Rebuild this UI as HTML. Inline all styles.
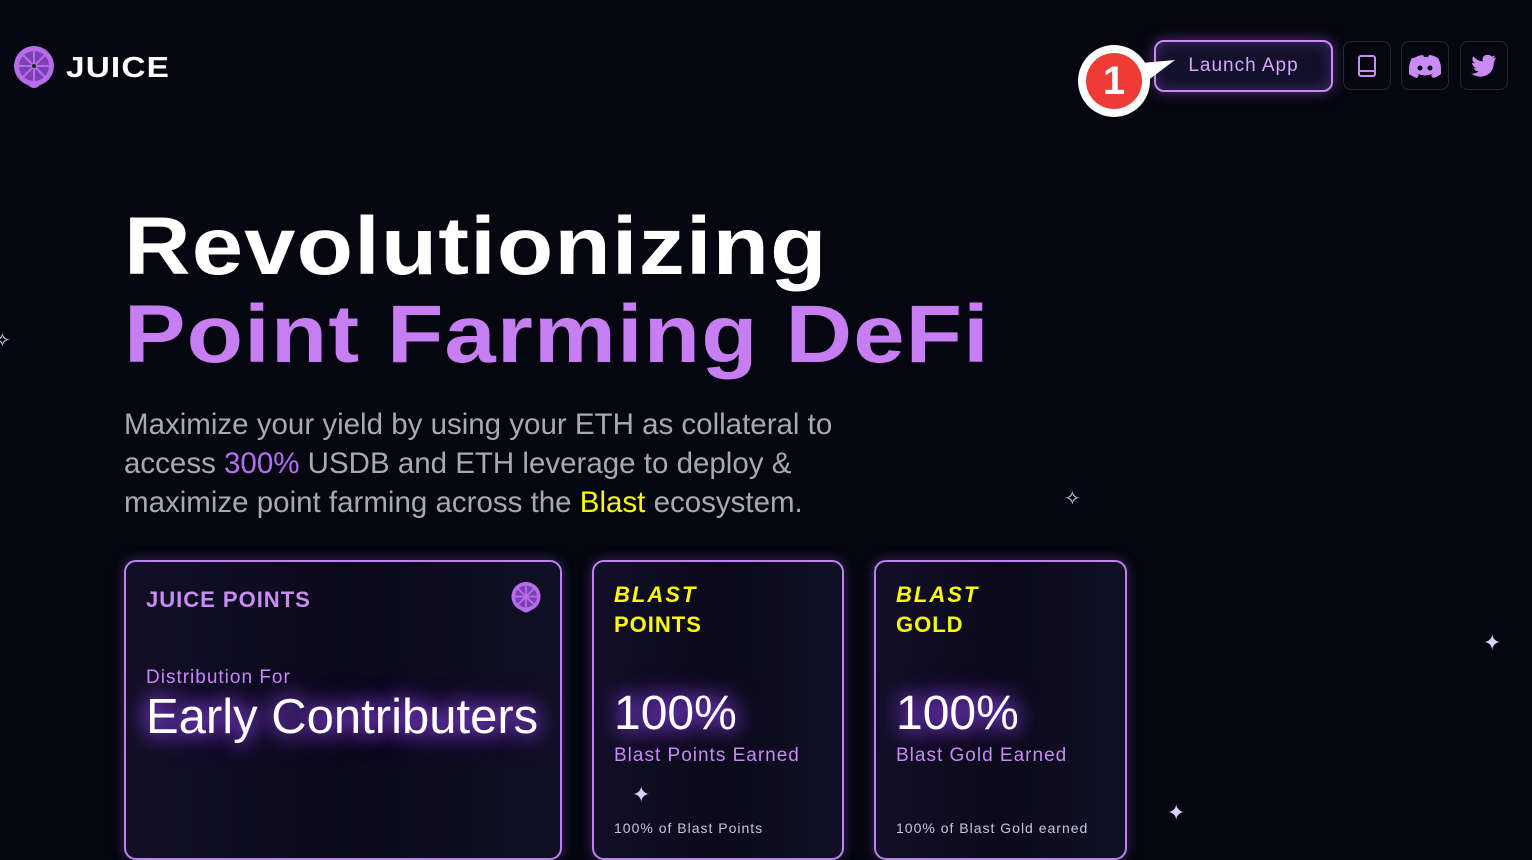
<!DOCTYPE html>
<html><head><style>
*{margin:0;padding:0;box-sizing:border-box}
body{width:1532px;height:840px;overflow:hidden;background:#05060f;font-family:"Liberation Sans",sans-serif;position:relative;color:#fff}
.abs{position:absolute}
.logo{left:12px;top:45px;width:44px;height:46px}
.brand{left:66px;top:52px;font-weight:bold;font-size:29px;letter-spacing:1px;transform:scaleX(1.15);transform-origin:left}
.btn{left:1154px;top:40px;width:179px;height:52px;border:2px solid #c98cf5;border-radius:10px;box-shadow:0 0 14px rgba(180,100,255,.45),inset 0 0 14px rgba(180,100,255,.3);color:#d7a6ff;font-size:19px;text-align:center;line-height:48px;letter-spacing:1px;background:#12102a}
.ib{top:41px;width:48px;height:49px;border:1px solid #262633;border-radius:8px;display:flex;align-items:center;justify-content:center}
.h{left:124px;font-weight:900;font-size:82px;transform:scaleX(1.125);transform-origin:left;letter-spacing:1px}
.p{left:124px;top:405px;font-size:29.5px;line-height:39px;color:#a9a9b5;width:735px}
.card{top:560px;height:300px;border:2px solid #bd82ee;border-radius:12px;background:linear-gradient(90deg,#120f26,#0b0a1a 50%,#110f24);box-shadow:0 0 12px rgba(170,100,255,.35)}
.t{font-weight:bold;font-size:22px;letter-spacing:1px}
.big{font-size:48px;text-shadow:0 0 18px #a050ff,0 0 30px #8a3cff}
.sub{font-size:19px;color:#c88af8;letter-spacing:1px}
.sm{font-size:14px;color:#c9c5dd;letter-spacing:1px}
.blast{font-style:italic;font-weight:bold;color:#fcfc03;font-size:22px;letter-spacing:2px}
.star{color:#d8cffd;font-size:22px}
</style></head><body>
<svg class="abs logo" viewBox="0 0 44 46"><circle cx="22" cy="21" r="20" fill="#b66ee8"/><circle cx="22" cy="21" r="15" fill="#7d3fb8"/><g stroke="#b66ee8" stroke-width="2"><line x1="22" y1="6" x2="22" y2="36"/><line x1="7" y1="21" x2="37" y2="21"/><line x1="11" y1="10" x2="33" y2="32"/><line x1="33" y1="10" x2="11" y2="32"/></g><circle cx="22" cy="21" r="2" fill="#222"/><path d="M14 38q8 10 16 0z" fill="#b66ee8"/></svg>
<div class="abs brand">JUICE</div>
<div class="abs btn">Launch App</div>
<div class="abs ib" style="left:1343px"><svg width="22" height="24" viewBox="0 0 22 24" fill="none" stroke="#c98cf5" stroke-width="2"><rect x="3" y="2" width="16" height="20" rx="2"/><line x1="3" y1="17" x2="19" y2="17"/></svg></div>
<div class="abs ib" style="left:1401px"><svg width="32" height="24" viewBox="0 0 32 24"><path d="M5 4q5-3 9-3l1 2q2-.5 4 0l1-2q4 0 9 3q4 7 3 16q-4 3-8 4l-2-3 3-2q-1 .5-2 1q-7 3-14 0l-2-1 3 2-2 3q-4-1-8-4q-1-9 3-16z" fill="#c98cf5"/><circle cx="11" cy="14" r="2.5" fill="#05060f"/><circle cx="21" cy="14" r="2.5" fill="#05060f"/></svg></div>
<div class="abs ib" style="left:1460px"><svg width="26" height="22" viewBox="0 0 24 20"><path d="M23 2q-1 .6-3 .8q2-1 2-2.6q-1 .8-3 1q-3-3-7-.5q-2 2-1 5Q6 5.5 2 1q-2 4 1.5 6.5Q2 7.5 1 7q0 3.5 4 5H2.5q1 3 4.5 3Q4 17.5 0 17q10 6 18-1q3-4 3-9z" fill="#c98cf5"/></svg></div>
<svg class="abs" style="left:1130px;top:50px" width="60" height="50"><path d="M0 14 L45 10 L5 40z" fill="#fff"/></svg>
<div class="abs" style="left:1078px;top:45px;width:72px;height:72px;border-radius:50%;background:#fff"></div>
<div class="abs" style="left:1086px;top:53px;width:56px;height:56px;border-radius:50%;background:#ef3b36;color:#fff;font-size:40px;font-weight:bold;text-align:center;line-height:56px">1</div>
<div class="abs h" style="top:200px;color:#fff">Revolutionizing</div>
<div class="abs h" style="top:288px;color:#c67ef2">Point Farming DeFi</div>
<div class="abs p">Maximize your yield by using your ETH as collateral to access <span style="color:#b36ef5">300%</span> USDB and ETH leverage to deploy &amp; maximize point farming across the <span style="color:#fcfc03">Blast</span> ecosystem.</div>
<div class="abs star" style="left:-6px;top:328px;font-size:20px">✧</div>
<div class="abs star" style="left:1064px;top:486px;font-size:20px">✧</div>
<div class="abs star" style="left:1483px;top:630px">✦</div>
<div class="abs star" style="left:1167px;top:800px">✦</div>
<div class="abs card" style="left:124px;width:438px">
<div class="abs t" style="left:20px;top:25px;color:#c98cf5">JUICE POINTS</div>
<svg class="abs" style="left:384px;top:19px" width="32" height="34" viewBox="0 0 44 46"><circle cx="22" cy="21" r="20" fill="#b66ee8"/><circle cx="22" cy="21" r="15" fill="#7d3fb8"/><g stroke="#b66ee8" stroke-width="2.5"><line x1="22" y1="6" x2="22" y2="36"/><line x1="7" y1="21" x2="37" y2="21"/><line x1="11" y1="10" x2="33" y2="32"/><line x1="33" y1="10" x2="11" y2="32"/></g><path d="M14 38q8 10 16 0z" fill="#b66ee8"/></svg>
<div class="abs sub" style="left:20px;top:105px">Distribution For</div>
<div class="abs big" style="left:20px;top:127px;font-size:49px">Early Contributers</div>
</div>
<div class="abs card" style="left:592px;width:252px">
<div class="abs blast" style="left:20px;top:20px">BLAST</div>
<div class="abs t" style="left:20px;top:50px;color:#fcfc03">POINTS</div>
<div class="abs big" style="left:20px;top:124px">100%</div>
<div class="abs sub" style="left:20px;top:183px">Blast Points Earned</div>
<div class="abs star" style="left:38px;top:220px">✦</div>
<div class="abs sm" style="left:20px;top:258px">100% of Blast Points</div>
</div>
<div class="abs card" style="left:874px;width:253px">
<div class="abs blast" style="left:20px;top:20px">BLAST</div>
<div class="abs t" style="left:20px;top:50px;color:#fcfc03">GOLD</div>
<div class="abs big" style="left:20px;top:124px">100%</div>
<div class="abs sub" style="left:20px;top:183px">Blast Gold Earned</div>
<div class="abs sm" style="left:20px;top:258px">100% of Blast Gold earned</div>
</div>
</body></html>
